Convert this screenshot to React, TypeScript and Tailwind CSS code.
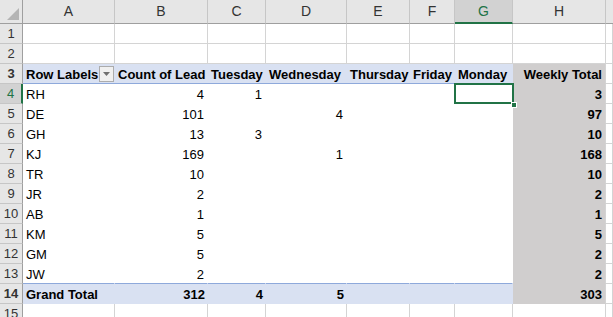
import React from "react";

const W = ["w-[92px]", "w-[93px]", "w-[58px]", "w-[81px]", "w-[63px]", "w-[45px]", "w-[58px]", "w-[93px]"];
const LETTERS = ["A", "B", "C", "D", "E", "F", "G", "H"];

type Row = { label: string; b: string; c?: string; d?: string; h: string };
const DATA: Row[] = [
  { label: "RH", b: "4", c: "1", h: "3" },
  { label: "DE", b: "101", d: "4", h: "97" },
  { label: "GH", b: "13", c: "3", h: "10" },
  { label: "KJ", b: "169", d: "1", h: "168" },
  { label: "TR", b: "10", h: "10" },
  { label: "JR", b: "2", h: "2" },
  { label: "AB", b: "1", h: "1" },
  { label: "KM", b: "5", h: "5" },
  { label: "GM", b: "5", h: "2" },
  { label: "JW", b: "2", h: "2" },
];

function RowHead({ n, active }: { n: number; active?: boolean }) {
  return (
    <div
      className={
        active
          ? "w-[23px] h-full shrink-0 flex items-center justify-center bg-[#d2d2d2] text-[#217346] border-r-2 border-r-[#217346] border-b border-b-[#c6c6c6] text-[13px]"
          : "w-[23px] h-full shrink-0 flex items-center justify-center bg-[#e6e6e6] text-[#333] border-r border-r-[#9f9f9f] border-b border-b-[#c6c6c6] text-[13px]"
      }
    >
      {n}
    </div>
  );
}

function Cell({
  i,
  cls,
  right,
  children,
}: {
  i: number;
  cls: string;
  right?: boolean;
  children?: React.ReactNode;
}) {
  return (
    <div
      className={`${W[i]} h-full shrink-0 flex items-center pt-[2px] whitespace-nowrap overflow-visible ${
        right ? "justify-end pr-[3px]" : "pl-[3px]"
      } ${cls}`}
    >
      {children}
    </div>
  );
}

function Tail({ cls }: { cls: string }) {
  return <div className={`flex-1 h-full ${cls}`} />;
}

const GRID = "border-r border-b border-[#d4d4d4] bg-white";
const BODY = "border-r border-b border-transparent bg-white";
const HCOL = "border-r border-r-[#d4d4d4] border-b border-b-transparent bg-[#d0cece] font-bold";

function EmptyRow({ n, h }: { n: number; h: string }) {
  return (
    <div className={`flex ${h}`}>
      <RowHead n={n} />
      {W.map((_, i) => (
        <Cell key={i} i={i} cls={GRID} />
      ))}
      <Tail cls={GRID} />
    </div>
  );
}

export default function App() {
  return (
    <div
      className="w-[613px] h-[317px] overflow-hidden bg-white text-black text-[13px]"
      style={{ fontFamily: '"Liberation Sans", Arial, sans-serif' }}
    >
      {/* column headers */}
      <div className="flex h-[24px]">
        <div className="w-[23px] shrink-0 h-full bg-[#e6e6e6] border-r border-r-[#9f9f9f] border-b border-b-[#9f9f9f] relative">
          <svg className="absolute left-[7px] top-[8px]" width="12" height="12" viewBox="0 0 12 12">
            <polygon points="12,0 12,12 0,12" fill="#b4b4b4" />
          </svg>
        </div>
        {LETTERS.map((l, i) => (
          <div
            key={l}
            className={
              l === "G"
                ? `${W[i]} shrink-0 h-full flex items-center justify-center bg-[#d2d2d2] text-[#217346] border-r border-r-[#c6c6c6] border-b-2 border-b-[#217346] text-[14px]`
                : `${W[i]} shrink-0 h-full flex items-center justify-center bg-[#e6e6e6] text-[#333] border-r border-r-[#c6c6c6] border-b border-b-[#9f9f9f] text-[14px]`
            }
          >
            {l}
          </div>
        ))}
        <div className="flex-1 h-full bg-[#e6e6e6] border-b border-b-[#9f9f9f]" />
      </div>

      <EmptyRow n={1} h="h-[20px]" />
      <EmptyRow n={2} h="h-[20px]" />

      {/* pivot header row */}
      <div className="flex h-[20px] font-bold">
        <RowHead n={3} />
        <Cell i={0} cls="bg-[#d9e1f2] border-b border-b-[#8ea9db] relative">
          <span>Row Labels</span>
          <span className="absolute left-[76px] top-[2px] w-[15px] h-[16px] bg-[#f0f0f0] border border-[#acacac] flex items-center justify-center">
            <svg width="7" height="4" viewBox="0 0 7 4">
              <polygon points="0,0 7,0 3.5,4" fill="#707070" />
            </svg>
          </span>
        </Cell>
        <Cell i={1} cls="bg-[#d9e1f2] border-b border-b-[#8ea9db]">Count of Lead</Cell>
        <Cell i={2} cls="bg-[#d9e1f2] border-b border-b-[#8ea9db]">Tuesday</Cell>
        <Cell i={3} cls="bg-[#d9e1f2] border-b border-b-[#8ea9db]">Wednesday</Cell>
        <Cell i={4} cls="bg-[#d9e1f2] border-b border-b-[#8ea9db]">Thursday</Cell>
        <Cell i={5} cls="bg-[#d9e1f2] border-b border-b-[#8ea9db]">Friday</Cell>
        <Cell i={6} cls="bg-[#d9e1f2] border-b border-b-[#8ea9db]">Monday</Cell>
        <Cell i={7} right cls={HCOL}>Weekly Total</Cell>
        <Tail cls={GRID} />
      </div>

      {DATA.map((r, idx) => {
        const last = idx === DATA.length - 1;
        const body = last
          ? "border-r border-r-transparent border-b border-b-[#8ea9db] bg-white"
          : BODY;
        return (
          <div key={r.label} className="flex h-[20px]">
            <RowHead n={idx + 4} active={idx === 0} />
            <Cell i={0} cls={body}>{r.label}</Cell>
            <Cell i={1} right cls={body}>{r.b}</Cell>
            <Cell i={2} right cls={body}>{r.c}</Cell>
            <Cell i={3} right cls={body}>{r.d}</Cell>
            <Cell i={4} cls={body} />
            <Cell i={5} cls={body} />
            {idx === 0 ? (
              <div className={`${W[6]} h-full shrink-0 relative bg-white`}>
                <div className="absolute left-[-1px] top-[-1px] right-[-1px] bottom-0 border-2 border-[#217346]" />
                <div className="absolute right-[-4px] bottom-[-4px] w-[6px] h-[6px] bg-[#217346] border border-white" />
              </div>
            ) : (
              <Cell i={6} cls={body} />
            )}
            <Cell i={7} right cls={HCOL}>{r.h}</Cell>
            <Tail cls={GRID} />
          </div>
        );
      })}

      {/* grand total */}
      <div className="flex h-[20px] font-bold">
        <RowHead n={14} />
        <Cell i={0} cls="bg-[#d9e1f2] border-b border-transparent">Grand Total</Cell>
        <Cell i={1} right cls="bg-[#d9e1f2] border-b border-transparent">312</Cell>
        <Cell i={2} right cls="bg-[#d9e1f2] border-b border-transparent">4</Cell>
        <Cell i={3} right cls="bg-[#d9e1f2] border-b border-transparent">5</Cell>
        <Cell i={4} cls="bg-[#d9e1f2] border-b border-transparent" />
        <Cell i={5} cls="bg-[#d9e1f2] border-b border-transparent" />
        <Cell i={6} cls="bg-[#d9e1f2] border-b border-transparent" />
        <Cell i={7} right cls={HCOL}>303</Cell>
        <Tail cls={GRID} />
      </div>

      <EmptyRow n={15} h="h-[20px]" />
    </div>
  );
}
